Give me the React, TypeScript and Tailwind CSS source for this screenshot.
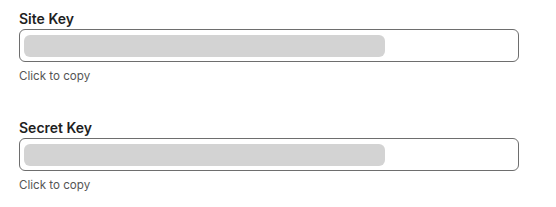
export default function App() {
  const Field = ({ label }: { label: string }) => (
    <div className="flex flex-col">
      <div className="text-[14px] leading-5 font-semibold text-[#1f1f1f]">{label}</div>
      <div className="w-[500px] h-[33px] border border-[#6e6e6e] rounded-[6px] bg-white pl-[4px] pt-[5px]">
        <div className="w-[361px] h-[22px] bg-[#d3d3d3] rounded-[6px]" />
      </div>
      <div className="mt-[6px] text-[11.6px] leading-4 text-[#555555]">Click to copy</div>
    </div>
  );
  return (
    <div
      className="w-[556px] h-[207px] bg-white pl-[19px] pt-[9px] flex flex-col gap-[34px]"
      style={{ fontFamily: "Inter, 'Noto Sans', sans-serif" }}
    >
      <Field label="Site Key" />
      <Field label="Secret Key" />
    </div>
  );
}
